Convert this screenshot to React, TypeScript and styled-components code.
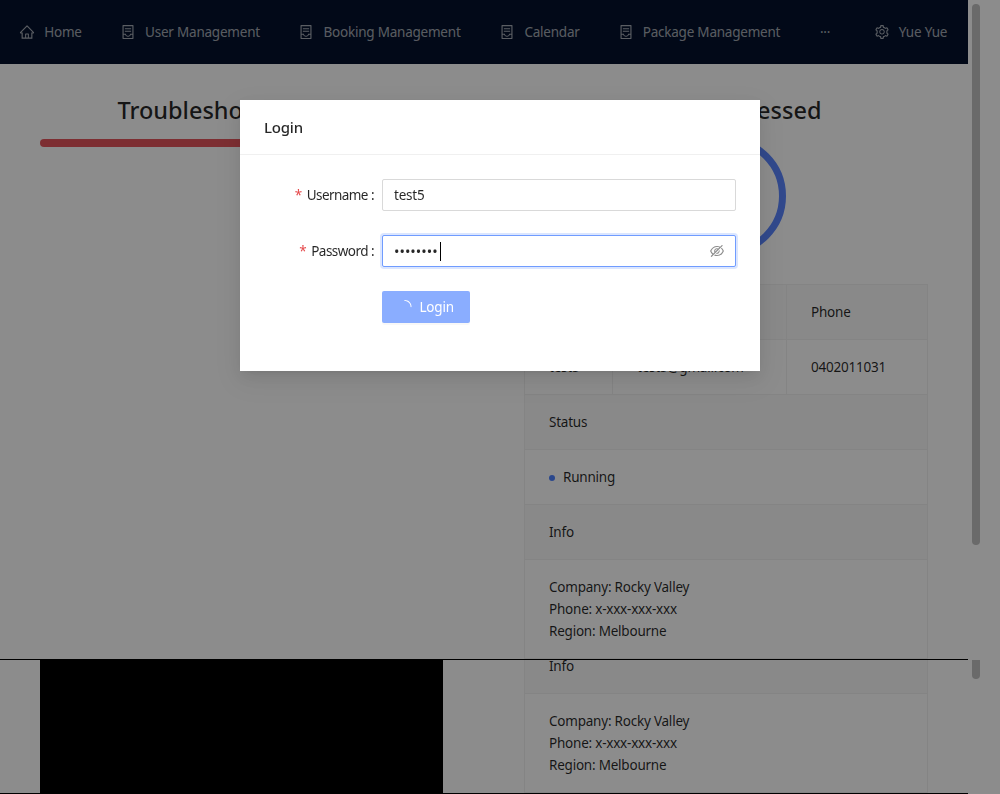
import React from "react";
import styled, { createGlobalStyle } from "styled-components";
import { AiOutlineHome, AiOutlineContainer, AiOutlineSetting, AiOutlineEyeInvisible, AiOutlineLoading } from "react-icons/ai";

const fontStack = `"Noto Sans", "Open Sans", "Liberation Sans", sans-serif`;
const primary = "#4d82ff";

const GlobalStyle = createGlobalStyle`
  * { box-sizing: border-box; }
  html, body { margin: 0; height: 100%; overflow: hidden; background: #fff; }
  body { font-family: ${fontStack}; font-size: 13.5px; letter-spacing: -0.22px; color: rgba(0, 0, 0, 0.85); }
`;

const Screen = styled.div`
  display: flex;
  width: 1000px;
  height: 794px;
  overflow: hidden;
`;

const Page = styled.div`
  width: 968px;
  flex: none;
`;

const Gutter = styled.div`
  flex: 1;
  display: flex;
  flex-direction: column;
  align-items: flex-start;
  padding: 4px 0 0 4px;
`;

const Thumb = styled.div<{ $h: number; $gap: number }>`
  width: 8px;
  height: ${(p) => p.$h}px;
  margin-bottom: ${(p) => p.$gap}px;
  background: #c1c1c1;
  border-radius: 0 0 4px 4px;
  &:first-child { border-radius: 4px; }
`;

const Nav = styled.nav`
  height: 64px;
  background: #04122d;
  display: flex;
  align-items: center;
  color: rgba(255, 255, 255, 0.65);
`;

const NavItem = styled.div<{ $w: number }>`
  width: ${(p) => p.$w}px;
  flex: none;
  display: flex;
  align-items: center;
  justify-content: center;
  gap: 10px;
  white-space: nowrap;
  svg { font-size: 16px; margin: 0 -1px; }
`;

const NavSpacer = styled.div`
  flex: 1;
`;

const Upper = styled.div`
  height: 595px;
  overflow: hidden;
  display: grid;
  grid-template-columns: 444px 404px;
  column-gap: 40px;
  padding: 28px 40px 0;
`;

const Column = styled.section`
  display: flex;
  flex-direction: column;
`;

const Title = styled.h2`
  margin: 0;
  font-size: 23.5px;
  font-weight: 500;
  letter-spacing: 0;
  line-height: 36px;
  text-align: center;
  white-space: nowrap;
`;

const Bar = styled.div`
  height: 8px;
  margin-top: 11px;
  background: #e4555c;
  border-radius: 4px;
`;

const Ring = styled.svg`
  display: block;
  width: 120px;
  height: 120px;
  margin: 8px auto 28px;
`;

const InfoTable = styled.table`
  width: 404px;
  table-layout: fixed;
  border-collapse: separate;
  border-spacing: 0;
  border-left: 1px solid #f0f0f0;
`;

const Th = styled.td`
  height: 55px;
  padding: 0 24px;
  background: #fafafa;
  border-right: 1px solid #f0f0f0;
  border-bottom: 1px solid #f0f0f0;
`;

const Td = styled.td`
  height: 55px;
  padding: 0 24px;
  border-right: 1px solid #f0f0f0;
  border-bottom: 1px solid #f0f0f0;
  line-height: 22px;
`;

const TopTable = styled(InfoTable)`
  border-top: 1px solid #f0f0f0;
`;

const BodyCell = styled(Td)`
  height: auto;
  padding: 16px 24px;
`;

const Dot = styled.span`
  display: inline-block;
  width: 6px;
  height: 6px;
  margin-right: 8px;
  border-radius: 50%;
  background: ${primary};
  vertical-align: middle;
`;

const Rule = styled.div`
  height: 1px;
  background: #000;
`;

const Lower = styled.div`
  height: 133px;
  overflow: hidden;
  display: grid;
  grid-template-columns: 403px 404px;
  column-gap: 81px;
  padding: 0 40px;
`;

const BlackBox = styled.div`
  background: #000;
`;

const ClippedTable = styled(InfoTable)`
  margin-top: -21px;
`;

const Mask = styled.div`
  position: fixed;
  inset: 0;
  display: flex;
  justify-content: center;
  align-items: flex-start;
  padding-top: 100px;
  background: rgba(0, 0, 0, 0.45);
`;

const Modal = styled.div`
  width: 520px;
  background: #fff;
  box-shadow: 0 3px 6px -4px rgba(0, 0, 0, 0.12), 0 6px 16px rgba(0, 0, 0, 0.08), 0 9px 28px 8px rgba(0, 0, 0, 0.05);
`;

const ModalHeader = styled.header`
  height: 55px;
  padding: 0 24px;
  display: flex;
  align-items: center;
  font-size: 15px;
  font-weight: 500;
  border-bottom: 1px solid #f0f0f0;
`;

const ModalBody = styled.div`
  padding: 24px 24px 48px;
  display: flex;
  flex-direction: column;
  gap: 24px;
`;

const FormRow = styled.div`
  display: flex;
  align-items: center;
  gap: 8px;
`;

const Label = styled.label`
  width: 110px;
  flex: none;
  text-align: right;
  white-space: nowrap;
  letter-spacing: -0.55px;
  &::before {
    content: "*";
    color: #e5484a;
    margin-right: 5px;
  }
  &::after {
    content: ":";
    margin-left: 3px;
  }
`;

const Field = styled.div<{ $focused?: boolean }>`
  flex: 1;
  height: 32px;
  padding: 0 11px;
  display: flex;
  align-items: center;
  background: #fff;
  border: 1px solid ${(p) => (p.$focused ? "#709cff" : "#d9d9d9")};
  border-radius: 2px;
  box-shadow: ${(p) => (p.$focused ? "0 0 0 2px rgba(77, 130, 255, 0.2)" : "none")};
`;

const TextInput = styled.input`
  flex: 1;
  min-width: 0;
  padding: 0;
  border: 0;
  outline: 0;
  font: inherit;
  letter-spacing: inherit;
  color: inherit;
  background: transparent;
`;

const PasswordInput = styled(TextInput)`
  flex: none;
  width: 46px;
  font-size: 14.5px;
  letter-spacing: 0;
`;

const Caret = styled.span`
  width: 1px;
  height: 19px;
  background: #000;
`;

const EyeSlot = styled.span`
  margin-left: auto;
  margin-right: -1px;
  display: flex;
  font-size: 16px;
  color: rgba(0, 0, 0, 0.45);
`;

const Actions = styled.div`
  padding-left: 118px;
`;

const LoginButton = styled.button`
  width: 88px;
  height: 32px;
  padding: 0 16px;
  display: flex;
  align-items: center;
  gap: 8px;
  border: 0;
  border-radius: 2px;
  background: ${primary};
  opacity: 0.65;
  color: #fff;
  font: inherit;
  letter-spacing: inherit;
  box-shadow: 0 2px 0 rgba(0, 0, 0, 0.045);
`;

const menu = [
  { label: "User Management", w: 177 },
  { label: "Booking Management", w: 202 },
  { label: "Calendar", w: 118 },
  { label: "Package Management", w: 201 },
];

const Contact: React.FC = () => (
  <BodyCell colSpan={3}>
    Company: Rocky Valley
    <br />
    Phone: x-xxx-xxx-xxx
    <br />
    Region: Melbourne
  </BodyCell>
);

const Columns: React.FC = () => (
  <colgroup>
    <col style={{ width: 88 }} />
    <col style={{ width: 174 }} />
    <col style={{ width: 141 }} />
  </colgroup>
);

const App: React.FC = () => {
  return (
    <Screen>
      <GlobalStyle />
      <Page>
        <Nav>
          <NavItem $w={102}>
            <AiOutlineHome />
            Home
          </NavItem>
          {menu.map((m) => (
            <NavItem key={m.label} $w={m.w}>
              <AiOutlineContainer />
              {m.label}
            </NavItem>
          ))}
          <NavItem $w={50}>···</NavItem>
          <NavSpacer />
          <NavItem $w={114}>
            <AiOutlineSetting />
            Yue Yue
          </NavItem>
        </Nav>
        <Upper>
          <Column>
            <Title>Troubleshooting Progress</Title>
            <Bar />
          </Column>
          <Column>
            <Title>Issues Processed</Title>
            <Ring viewBox="0 0 120 120">
              <circle cx="60" cy="60" r="56.5" fill="none" stroke="#5a85ff" strokeWidth="7" />
            </Ring>
            <TopTable>
              <Columns />
              <tbody>
                <tr>
                  <Th>Name</Th>
                  <Th>Email</Th>
                  <Th>Phone</Th>
                </tr>
                <tr>
                  <Td>test5</Td>
                  <Td>test5@gmail.com</Td>
                  <Td>0402011031</Td>
                </tr>
                <tr>
                  <Th colSpan={3}>Status</Th>
                </tr>
                <tr>
                  <Td colSpan={3}>
                    <Dot />
                    Running
                  </Td>
                </tr>
                <tr>
                  <Th colSpan={3}>Info</Th>
                </tr>
                <tr>
                  <Contact />
                </tr>
              </tbody>
            </TopTable>
          </Column>
        </Upper>
        <Rule />
        <Lower>
          <BlackBox />
          <ClippedTable>
            <Columns />
            <tbody>
              <tr>
                <Th colSpan={3}>Info</Th>
              </tr>
              <tr>
                <Contact />
              </tr>
            </tbody>
          </ClippedTable>
        </Lower>
        <Rule />
      </Page>
      <Gutter>
        <Thumb $h={541} $gap={115} />
        <Thumb $h={19} $gap={0} />
      </Gutter>
      <Mask>
        <Modal>
          <ModalHeader>Login</ModalHeader>
          <ModalBody>
            <FormRow>
              <Label>Username</Label>
              <Field>
                <TextInput readOnly value="test5" />
              </Field>
            </FormRow>
            <FormRow>
              <Label>Password</Label>
              <Field $focused>
                <PasswordInput readOnly type="password" value="test1234" />
                <Caret />
                <EyeSlot>
                  <AiOutlineEyeInvisible />
                </EyeSlot>
              </Field>
            </FormRow>
            <Actions>
              <LoginButton>
                <AiOutlineLoading />
                Login
              </LoginButton>
            </Actions>
          </ModalBody>
        </Modal>
      </Mask>
    </Screen>
  );
};

export default App;
